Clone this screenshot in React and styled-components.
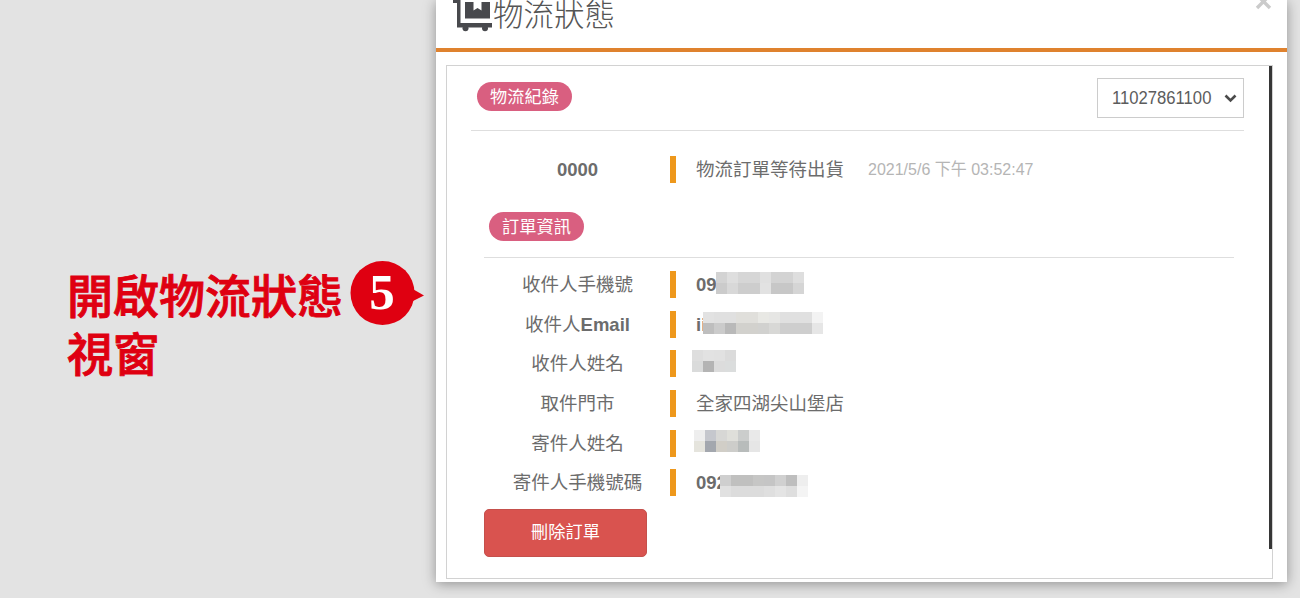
import React from "react";
import styled, { createGlobalStyle } from "styled-components";

const Global = createGlobalStyle`
  *, *::before, *::after { box-sizing: border-box; }
  body {
    margin: 0;
    background: #e3e3e3;
    color: #6c6c6c;
    font: 18.5px "Liberation Sans", "Noto Sans CJK TC", sans-serif;
  }
`;

const Page = styled.main`
  display: flex;
  width: 1300px;
  height: 598px;
  overflow: hidden;
`;

const Callout = styled.section`
  display: flex;
  width: 436px;
  flex: none;
  padding: 261px 0 0 67px;
`;

const CalloutText = styled.h2`
  margin: 3px 0 0;
  width: 276px;
  font: 500 46px/58px "Noto Sans CJK TC", sans-serif;
  color: #df0011;
  -webkit-text-stroke: 0.9px #df0011;
`;

const StepBadge = styled.svg`
  display: block;
  flex: none;
  width: 75px;
  height: 65px;
  margin-left: 7px;
`;

const Dialog = styled.section`
  width: 851px;
  height: 582px;
  flex: none;
  background: #fff;
  box-shadow: 0 2px 12px rgba(0, 0, 0, 0.36);
`;

const Header = styled.header`
  display: flex;
  height: 52px;
  padding: 0 14px 0 17px;
  border-bottom: 4px solid #df822e;
`;

const CartIcon = styled.svg`
  display: block;
  flex: none;
  width: 40px;
  height: 32px;
`;

const Title = styled.h1`
  margin: -9px 0 0;
  font: 300 30.5px/45px "Noto Sans CJK TC", sans-serif;
  color: #555;
`;

const CloseIcon = styled.svg`
  display: block;
  width: 18px;
  height: 12px;
  margin-left: auto;
`;

const Panel = styled.div`
  display: flex;
  justify-content: space-between;
  width: 827px;
  height: 514px;
  margin: 13px 0 0 10px;
  border: 1px solid #d2d2d2;
`;

const PanelBody = styled.div`
  width: 797px;
  padding-left: 24px;
`;

const ScrollThumb = styled.div`
  width: 3px;
  height: 483px;
  background: #363636;
`;

const RecordBar = styled.div`
  display: flex;
  justify-content: space-between;
  height: 65px;
  padding: 12px 0 0 6px;
  border-bottom: 1px solid #dedede;
`;

const Pill = styled.span`
  display: block;
  width: 95px;
  height: 29px;
  margin-top: ${(p) => p.$top || 0}px;
  border-radius: 15px;
  background: #d95f80;
  color: #fff;
  font: 17.2px/27px "Noto Sans CJK TC", sans-serif;
  text-align: center;
`;

const SelectBox = styled.div`
  display: flex;
  align-items: center;
  width: 147px;
  height: 40px;
  padding-left: 14px;
  border: 1px solid #ccc;
  color: #5c5c5c;
`;

const SelectValue = styled.span`
  width: 107px;
  margin-right: 4px;
  font-size: 18px;
  white-space: nowrap;
  transform: scaleX(0.925);
  transform-origin: left;
`;

const Chevron = styled.svg`
  width: 13px;
  height: 9px;
  flex: none;
  margin-left: 1px;
`;

const Row = styled.div`
  display: grid;
  grid-template-columns: 214px 1fr;
  align-items: center;
  height: ${(p) => p.$height || 39.7}px;
`;

const Label = styled.div`
  width: 187px;
  margin-left: 13px;
  font-weight: ${(p) => (p.$strong ? 700 : 400)};
  line-height: 27px;
  text-align: center;

  b { font-weight: 700; }
`;

const Value = styled.div`
  display: flex;
  align-items: center;
  height: 27px;
  margin-left: -15px;
  padding-left: 20px;
  border-left: 6px solid #ee981c;
  font-weight: ${(p) => (p.$strong ? 700 : 400)};
  line-height: 27px;
  white-space: nowrap;
`;

const Visible = styled.span`
  width: ${(p) => p.$width}px;
  flex: none;
`;

const Timestamp = styled.span`
  margin-left: 24px;
  color: #b5b5b5;
  font-size: 16px;
  transform: scaleY(1.08);
`;

const OrderHeading = styled.div`
  height: 46px;
  width: 750px;
  margin: 0 0 6.5px 13px;
  padding-left: 5px;
  border-bottom: 1px solid #dedede;
`;

const Mosaic = styled.span`
  position: relative;
  display: grid;
  grid-template-columns: repeat(${(p) => p.$cols}, 10.95px);
  grid-auto-rows: 11px;
  margin: ${(p) => p.$top}px 0 0 ${(p) => p.$left || 0}px;
`;

const Cell = styled.i`
  background: ${(p) => p.$tone};
`;

const DeleteButton = styled.button`
  display: block;
  width: 163px;
  height: 48px;
  margin: 6px 0 0 13px;
  padding: 0 0 3px;
  border: 1px solid #c5504c;
  border-radius: 5px;
  background: #d9534f;
  color: #fff;
  font: 17.2px/42px "Noto Sans CJK TC", sans-serif;
`;

const fields = [
  {
    label: "收件人手機號", text: "09", width: 20, top: -1,
    tones: [
      "#d3d3d3 #dedede #d6d6d6 #d6d6d6 #e0e0e0 #d3d3d3 #d3d3d3 #dedede",
      "#cbcbcb #d8d8d8 #cdcdcd #cdcdcd #e2e2e2 #c7c7c7 #c7c7c7 #d5d5d5",
    ],
  },
  {
    label: "收件人", latin: "Email", text: "ii", width: 7, top: -1,
    tones: [
      "#e2e2e2 #e0e0e0 #e0e0e0 #e0dfdb #e0dfdb #e8e8e4 #e6e6e4 #e0e0e0 #e0e0e0 #e0e0e0 #f3f3f3",
      "#bebebe #cbcbcb #b9b9b9 #d2d1cd #d2d1cd #d1d1cf #d8d8d6 #cecece #cecece #cecece #e6e6e6",
    ],
  },
  {
    label: "收件人姓名", left: -4, top: -3,
    tones: ["#dedede #e2e2e2 #e1e1e1 #dbdbdb", "#dadbdb #b4b4b4 #dcdcdc #dbdddd"],
  },
  { label: "取件門市", text: "全家四湖尖山堡店" },
  {
    label: "寄件人姓名", left: -2, top: -2.5,
    tones: [
      "#eeeeee #c5c7cd #d7d7d5 #dfdfda #cbcdcc #e9e9e9",
      "#e5e4dd #a3a7ae #d1cec7 #cdcdca #b8bcbb #e6e6e6",
    ],
  },
  {
    label: "寄件人手機號碼", text: "092", width: 24, top: 3.5,
    tones: [
      "#cfcfcf #c0c0bf #c0c0bf #c6c6c5 #c5c5c5 #d0d0d0 #bebebe #eeeeee",
      "#e1e1e1 #dcdcdc #dcdcdc #dcdcdc #dfdfdf #e4e4e4 #dedede #f4f4f4",
    ],
  },
];

function Redacted({ tones, top, left }) {
  const rows = tones.map((line) => line.split(" "));
  return (
    <Mosaic $cols={rows[0].length} $top={top * 2} $left={left}>
      {rows.flat().map((tone, i) => <Cell key={i} $tone={tone} />)}
    </Mosaic>
  );
}

export default function App() {
  return (
    <>
      <Global />
      <Page>
        <Callout>
          <CalloutText>開啟物流狀態視窗</CalloutText>
          <StepBadge viewBox="0 0 75 65">
            <circle cx="32.5" cy="32" r="32" fill="#df0011" />
            <path d="M61 27 74 34.5 61 41Z" fill="#df0011" />
            <text x="32" y="48" fill="#fff" textAnchor="middle" fontFamily="Liberation Serif, serif" fontWeight="700" fontSize="51">5</text>
          </StepBadge>
        </Callout>
        <Dialog>
          <Header>
            <CartIcon viewBox="0 0 40 32">
              <path d="M0 0H7.500V23H39V27.500H4V3H0Z" fill="#48494d" />
              <path d="M12 2H20.500V10.500L24.500 8L28.500 10.500V2H37V18.500H12Z" fill="#48494d" />
              <circle cx="12.500" cy="28.300" r="3" fill="#48494d" />
              <circle cx="32" cy="28.300" r="3" fill="#48494d" />
            </CartIcon>
            <Title>物流狀態</Title>
            <CloseIcon viewBox="0 0 18 12">
              <path d="M2-5 15 8M15-5 2 8" stroke="#cbcbcb" strokeWidth="3.4" />
            </CloseIcon>
          </Header>
          <Panel>
            <PanelBody>
              <RecordBar>
                <Pill $top={4}>物流紀錄</Pill>
                <SelectBox>
                  <SelectValue>11027861100</SelectValue>
                  <Chevron viewBox="0 0 13 9">
                    <path d="M1.500 1.500 6.500 6.500 11.500 1.500" fill="none" stroke="#4b4b4b" strokeWidth="2.600" />
                  </Chevron>
                </SelectBox>
              </RecordBar>
              <Row $height={76}>
                <Label $strong>0000</Label>
                <Value>物流訂單等待出貨<Timestamp>2021/5/6 下午 03:52:47</Timestamp></Value>
              </Row>
              <OrderHeading>
                <Pill $top={5}>訂單資訊</Pill>
              </OrderHeading>
              {fields.map((f) => (
                <Row key={f.label}>
                  <Label>{f.label}{f.latin && <b>{f.latin}</b>}</Label>
                  <Value $strong={Boolean(f.width)}>
                    {f.text && (f.width ? <Visible $width={f.width}>{f.text}</Visible> : f.text)}
                    {f.tones && <Redacted {...f} />}
                  </Value>
                </Row>
              ))}
              <DeleteButton>刪除訂單</DeleteButton>
            </PanelBody>
            <ScrollThumb />
          </Panel>
        </Dialog>
      </Page>
    </>
  );
}
